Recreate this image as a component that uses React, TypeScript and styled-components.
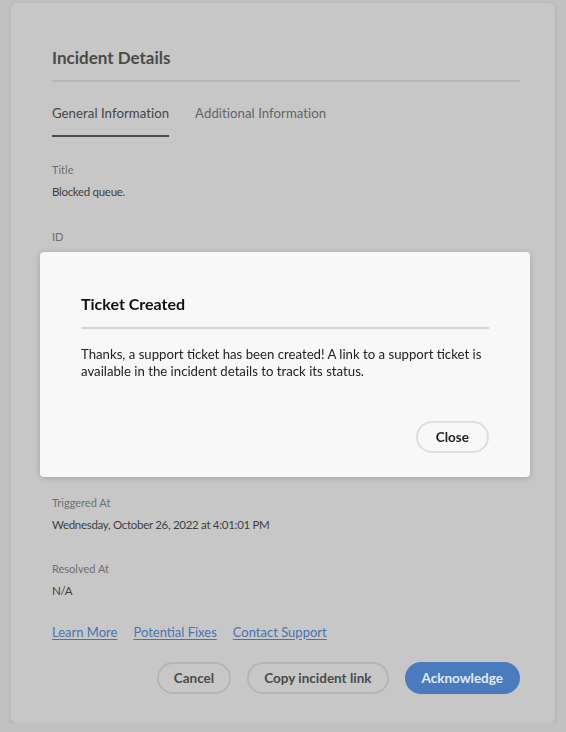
import React from "react";
import styled, { createGlobalStyle } from "styled-components";

const GlobalStyle = createGlobalStyle`
  html, body { margin: 0; padding: 0; }
  body {
    background: #c1c1c1;
    font-family: Lato, "Open Sans", sans-serif;
    -webkit-font-smoothing: antialiased;
  }
`;

const Panel = styled.section`
  box-sizing: border-box;
  margin: 3px 0 0 11px;
  width: 544px;
  height: 720px;
  padding: 44px 35px 0 41px;
  background: #c7c7c7;
  border-radius: 6px;
  box-shadow: 0 1px 4px rgba(0, 0, 0, 0.12);
  display: flex;
  flex-direction: column;
`;

const Heading = styled.h2`
  margin: 0;
  font-size: 17px;
  line-height: 22px;
  font-weight: 700;
  color: #4a4a4a;
`;

const Divider = styled.hr<{ $color: string; $gap: number }>`
  margin: ${(p) => p.$gap}px 0 0;
  border: 0;
  height: 2px;
  background: ${(p) => p.$color};
`;

const TabList = styled.div`
  display: flex;
  gap: 26px;
`;

const Tab = styled.div<{ $active?: boolean }>`
  padding: 22px 0 13px;
  font-size: 13.2px;
  line-height: 18px;
  letter-spacing: 0.05px;
  color: ${(p) => (p.$active ? "#454545" : "#646464")};
  border-bottom: 2px solid ${(p) => (p.$active ? "#4b4b4b" : "transparent")};
`;

const Fields = styled.div`
  display: flex;
  flex-direction: column;
  gap: 27px;
  margin-top: 25px;
`;

const Field = styled.div`
  display: flex;
  flex-direction: column;
  gap: 5px;
`;

const Label = styled.div`
  font-size: 11px;
  line-height: 16px;
  color: #6e6e6e;
`;

const Value = styled.div`
  font-size: 11.5px;
  line-height: 18.5px;
  letter-spacing: -0.3px;
  color: #3f3f3f;
`;

const Links = styled.div`
  display: flex;
  gap: 16px;
  margin-top: 22px;
`;

const Link = styled.a`
  font-size: 13px;
  line-height: 18px;
  color: #4b73ad;
  text-decoration: underline;
  text-underline-offset: 2px;
  cursor: pointer;
`;

const Actions = styled.div`
  display: flex;
  justify-content: flex-end;
  gap: 16px;
  margin-top: 21px;
`;

const Button = styled.button<{ $variant: "secondary" | "cta" | "modal" }>`
  box-sizing: border-box;
  height: 32px;
  padding: 0 ${(p) => (p.$variant === "modal" ? 18 : 15)}px;
  border-radius: 16px;
  font-family: Lato, "Open Sans", sans-serif;
  font-size: 13.5px;
  font-weight: 700;
  cursor: pointer;
  border: 2px solid
    ${(p) =>
      p.$variant === "cta" ? "#4a7bbe" : p.$variant === "modal" ? "#dedede" : "#b5b5b5"};
  background: ${(p) => (p.$variant === "cta" ? "#4a7bbe" : "transparent")};
  color: ${(p) =>
    p.$variant === "cta" ? "#e3eaf4" : p.$variant === "modal" ? "#1e1e1e" : "#4a4a4a"};
`;

const Modal = styled.div`
  position: fixed;
  left: 40px;
  top: 252px;
  box-sizing: border-box;
  width: 490px;
  height: 225px;
  padding: 42px 41px 0;
  background: #f8f8f8;
  border-radius: 4px;
  box-shadow: 0 1px 6px rgba(0, 0, 0, 0.18);
  display: flex;
  flex-direction: column;
`;

const ModalTitle = styled.h3`
  margin: 0;
  font-size: 16px;
  line-height: 20px;
  font-weight: 700;
  color: #111;
`;

const ModalBody = styled.p`
  margin: 16.5px 0 0;
  font-size: 13.2px;
  line-height: 17px;
  color: #222;
`;

const ModalFooter = styled.div`
  display: flex;
  justify-content: flex-end;
  margin-top: 41.5px;
`;

const fields: { label: string; value: string }[] = [
  { label: "Title", value: "Blocked queue." },
  { label: "ID", value: "7f3c2a91-5d4e-4b8a-9c61-2e0f8d3b7a45" },
  { label: "Status", value: "Open" },
  { label: "Severity", value: "Critical" },
  { label: "Type", value: "Queue" },
  { label: "Triggered At", value: "Wednesday, October 26, 2022 at 4:01:01 PM" },
  { label: "Resolved At", value: "N/A" },
];

export default function App() {
  return (
    <>
      <GlobalStyle />
      <Panel>
        <Heading>Incident Details</Heading>
        <Divider $color="#b7b7b7" $gap={11} />
        <TabList>
          <Tab $active>General Information</Tab>
          <Tab>Additional Information</Tab>
        </TabList>
        <Fields>
          {fields.map((f) => (
            <Field key={f.label}>
              <Label>{f.label}</Label>
              <Value>{f.value}</Value>
            </Field>
          ))}
        </Fields>
        <Links>
          <Link>Learn More</Link>
          <Link>Potential Fixes</Link>
          <Link>Contact Support</Link>
        </Links>
        <Actions>
          <Button $variant="secondary">Cancel</Button>
          <Button $variant="secondary">Copy incident link</Button>
          <Button $variant="cta">Acknowledge</Button>
        </Actions>
      </Panel>
      <Modal role="dialog">
        <ModalTitle>Ticket Created</ModalTitle>
        <Divider $color="#d5d5d5" $gap={13} />
        <ModalBody>
          Thanks, a support ticket has been created! A link to a support ticket is available in the
          incident details to track its status.
        </ModalBody>
        <ModalFooter>
          <Button $variant="modal">Close</Button>
        </ModalFooter>
      </Modal>
    </>
  );
}
